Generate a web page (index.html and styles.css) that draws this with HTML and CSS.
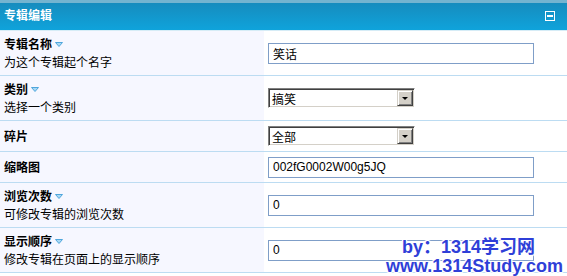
FILE: index.html
```html
<!DOCTYPE html>
<html lang="zh-CN">
<head>
    <meta charset="UTF-8">
    <title>专辑编辑</title>
    <link rel="stylesheet" href="styles.css">
</head>
<body>
    <div class="panel">
        <div class="panel-head">
            <span class="panel-title">专辑编辑</span>
            <span class="toggle"></span>
        </div>

        <div class="row tall">
            <div class="label">
                <div class="name">专辑名称 <svg class="tip" width="8" height="5" viewBox="0 0 8 5"><path d="M0.5 0.5h7L4 4.5z" fill="#a8d8f4" stroke="#4fa6dc" stroke-width="1"/></svg></div>
                <div class="desc">为这个专辑起个名字</div>
            </div>
            <div class="field"><input type="text" class="text" value="笑话"></div>
        </div>

        <div class="row tall">
            <div class="label">
                <div class="name">类别 <svg class="tip" width="8" height="5" viewBox="0 0 8 5"><path d="M0.5 0.5h7L4 4.5z" fill="#a8d8f4" stroke="#4fa6dc" stroke-width="1"/></svg></div>
                <div class="desc">选择一个类别</div>
            </div>
            <div class="field">
                <span class="select-wrap">
                    <select class="select"><option>搞笑</option></select>
                    <span class="arrow"></span>
                </span>
            </div>
        </div>

        <div class="row short">
            <div class="label">
                <div class="name">碎片</div>
            </div>
            <div class="field">
                <span class="select-wrap">
                    <select class="select"><option>全部</option></select>
                    <span class="arrow"></span>
                </span>
            </div>
        </div>

        <div class="row short">
            <div class="label">
                <div class="name">缩略图</div>
            </div>
            <div class="field"><input type="text" class="text" value="002fG0002W00g5JQ"></div>
        </div>

        <div class="row tall">
            <div class="label">
                <div class="name">浏览次数 <svg class="tip" width="8" height="5" viewBox="0 0 8 5"><path d="M0.5 0.5h7L4 4.5z" fill="#a8d8f4" stroke="#4fa6dc" stroke-width="1"/></svg></div>
                <div class="desc">可修改专辑的浏览次数</div>
            </div>
            <div class="field"><input type="text" class="text" value="0"></div>
        </div>

        <div class="row tall">
            <div class="label">
                <div class="name">显示顺序 <svg class="tip" width="8" height="5" viewBox="0 0 8 5"><path d="M0.5 0.5h7L4 4.5z" fill="#a8d8f4" stroke="#4fa6dc" stroke-width="1"/></svg></div>
                <div class="desc">修改专辑在页面上的显示顺序</div>
            </div>
            <div class="field"><input type="text" class="text" value="0"></div>
        </div>

        <div class="watermark">
            <div class="wm-line1">by：1314学习网</div>
            <div class="wm-line2">www.1314Study.com</div>
        </div>
    </div>
</body>
</html>
```

FILE: styles.css
```css
* {
    margin: 0;
    padding: 0;
    box-sizing: border-box;
}

body {
    font-family: "Liberation Sans", "Noto Sans CJK SC", sans-serif;
    font-size: 12px;
    color: #000;
    background-color: #fff;
}

.panel {
    position: relative;
    width: 567px;
    height: 276px;
    overflow: hidden;
}

.panel-head {
    height: 31px;
    display: flex;
    align-items: center;
    justify-content: space-between;
    padding: 0 12px 0 4px;
    background: linear-gradient(#74b4d0 0, #74b4d0 3px, #168cbe 3px, #0fa3db 30px);
    border-bottom: 1px solid #d6ecf6;
}

.panel-title {
    color: #fff;
    font-weight: bold;
    font-family: "Noto Sans CJK SC", sans-serif;
    font-size: 12px;
    line-height: 12px;
}

.toggle {
    position: relative;
    width: 10px;
    height: 10px;
    margin-top: 1px;
    border: 1px solid #fff;
}

.toggle::after {
    content: "";
    position: absolute;
    left: 1px;
    top: 3px;
    width: 6px;
    height: 2px;
    background-color: #fff;
}

.row {
    display: flex;
    border-bottom: 1px solid #bcdcf2;
}

.row.tall {
    height: 45px;
}

.row.short {
    height: 31px;
}

.label {
    width: 264px;
    padding: 0 4px;
    background-color: #f6f7ff;
    display: flex;
    flex-direction: column;
    justify-content: center;
    font-family: "Noto Sans CJK SC", sans-serif;
}

.row.tall .label {
    justify-content: flex-start;
    padding-top: 4px;
}

.name {
    font-weight: bold;
    line-height: 18px;
    display: flex;
    align-items: center;
    gap: 3px;
}

.desc {
    line-height: 18px;
}

.tip {
    display: block;
    margin-top: 1px;
}

.field {
    flex: 1;
    display: flex;
    align-items: center;
    padding-left: 4px;
}

.text {
    width: 266px;
    height: 21px;
    padding: 0 4px;
    border: 1px solid #7f9ec8;
    font-family: "Liberation Sans", "Noto Sans CJK SC", sans-serif;
    font-size: 12px;
    color: #000;
    outline: none;
}

.select-wrap {
    position: relative;
    display: inline-block;
    width: 147px;
    height: 20px;
}

.select {
    appearance: none;
    -webkit-appearance: none;
    width: 147px;
    height: 20px;
    padding: 0 3px;
    background-color: #fff;
    border-top: 1px solid #808080;
    border-left: 1px solid #808080;
    border-right: 1px solid #fff;
    border-bottom: 1px solid #fff;
    box-shadow: inset 1px 1px 0 #404040, inset -1px -1px 0 #d4d0c8;
    font-family: "Noto Sans CJK SC", sans-serif;
    font-size: 12px;
    color: #000;
    outline: none;
}

.arrow {
    position: absolute;
    right: 2px;
    top: 2px;
    width: 16px;
    height: 16px;
    background-color: #d4d0c8;
    border-top: 1px solid #d4d0c8;
    border-left: 1px solid #d4d0c8;
    border-right: 1px solid #404040;
    border-bottom: 1px solid #404040;
    box-shadow: inset 1px 1px 0 #fff, inset -1px -1px 0 #808080;
    pointer-events: none;
}

.arrow::after {
    content: "";
    position: absolute;
    left: 4px;
    top: 6px;
    border-left: 3px solid transparent;
    border-right: 3px solid transparent;
    border-top: 3px solid #000;
}

.watermark {
    position: absolute;
    right: 4px;
    bottom: 0;
    text-align: right;
    font-family: "Liberation Sans", "Noto Sans CJK SC", sans-serif;
    font-weight: bold;
    font-size: 18px;
    line-height: 19px;
    color: #2f3fd8;
    text-shadow: 1px 0 0 #fff, -1px 0 0 #fff, 0 1px 0 #fff, 0 -1px 0 #fff,
        1px 1px 1px #fff, -1px -1px 1px #fff, 1px -1px 1px #fff, -1px 1px 1px #fff;
}

.wm-line1 {
    padding-right: 28px;
}
```
